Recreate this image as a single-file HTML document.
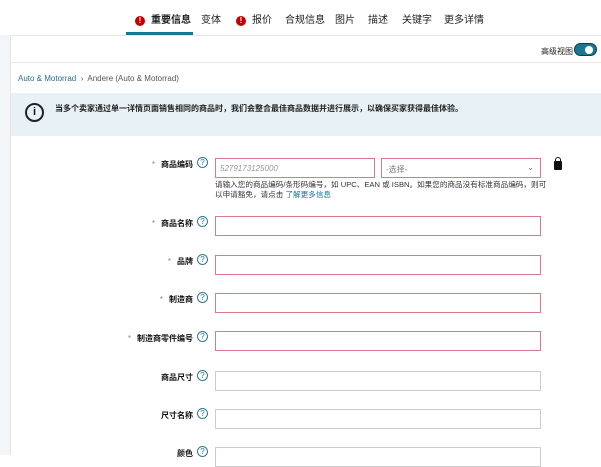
<!DOCTYPE html>
<html><head><meta charset="utf-8"><style>
*{margin:0;padding:0;box-sizing:border-box}
body{width:601px;height:455px;overflow:hidden;background:#fff;font-family:"Liberation Sans","Noto Sans CJK SC",sans-serif;color:#111;position:relative}
.a{position:absolute}
.tab{position:absolute;top:11px;font-size:10px;color:#222}
.err{display:inline-block;width:10px;height:10px;border-radius:50%;background:#c40000;color:#fff;font-size:8px;font-weight:bold;text-align:center;line-height:10px;vertical-align:0px;margin-right:6px}
.lbl{position:absolute;right:408px;font-size:8px;font-weight:bold;white-space:nowrap;color:#111}
.star{color:#888;font-weight:normal;margin-right:6px}
.q{position:absolute;left:197px;width:11px;height:11px;border:1px solid #2a7a93;border-radius:50%;font-size:8px;color:#2a7a93;text-align:center;line-height:9px}
.in{position:absolute;left:215px;width:326px;height:20px;border:1px solid #ccc;background:#fff}
.red{border-color:#d9798c}
</style></head><body>
<div class="tab" style="left:135px;font-weight:bold"><span class="err">!</span>重要信息</div>
<div class="tab" style="left:201px">变体</div>
<div class="tab" style="left:236px"><span class="err">!</span>报价</div>
<div class="tab" style="left:285px">合规信息</div>
<div class="tab" style="left:335px">图片</div>
<div class="tab" style="left:368px">描述</div>
<div class="tab" style="left:402px">关键字</div>
<div class="tab" style="left:444px">更多详情</div>
<div class="a" style="left:126px;top:32px;width:67px;height:3px;background:#1a7692"></div>
<div class="a" style="left:0;top:35px;width:601px;height:420px;background:#f3f5f8"></div>
<div class="a" style="left:10px;top:35px;width:591px;height:420px;background:#fff;border-left:1px solid #e5e5e5;border-top:1px solid #e5e5e5"></div>
<div class="a" style="left:10px;top:62px;width:591px;height:1px;background:#e8e8e8"></div>
<div class="a" style="left:541px;top:46px;font-size:8px;color:#222">高级视图</div>
<div class="a" style="left:574px;top:43px;width:23px;height:13px;border-radius:7px;background:#1a7692;border:1px solid #0d3d4c"></div>
<div class="a" style="left:585px;top:46px;width:8px;height:8px;border-radius:50%;background:#fff"></div>
<div class="a" style="left:18px;top:74px;font-size:8px;color:#555"><span style="color:#2a6f86">Auto &amp; Motorrad</span> &nbsp;›&nbsp; Andere (Auto &amp; Motorrad)</div>
<div class="a" style="left:11px;top:93px;width:590px;height:43px;background:#e8f2f6"></div>
<div class="a" style="left:25px;top:103px;width:19px;height:19px;border:2px solid #222;border-radius:50%;font-size:11px;font-weight:bold;text-align:center;line-height:15px">i</div>
<div class="a" style="left:55px;top:103px;font-size:8px;font-weight:bold;color:#222">当多个卖家通过单一详情页面销售相同的商品时，我们会整合最佳商品数据并进行展示，以确保买家获得最佳体验。</div>

<div class="lbl" style="top:159px"><span class="star">*</span>商品编码</div><div class="q" style="top:157px">?</div>
<div class="in red" style="top:158px;width:160px;font-size:8px;font-style:italic;color:#999;padding:5px 4px">5279173125000</div>
<div class="in red" style="top:158px;left:381px;width:160px;font-size:8px;color:#777;padding:5px 4px">-选择-<span style="position:absolute;right:6px;top:4px">⌄</span></div>
<div class="a" style="left:554px;top:161px;width:8px;height:9px;background:#111;border-radius:1px"></div>
<div class="a" style="left:555px;top:157px;width:6px;height:6px;border:1.5px solid #111;border-bottom:none;border-radius:3px 3px 0 0"></div>
<div class="a" style="left:215px;top:180px;font-size:7.6px;line-height:10px;color:#333;white-space:nowrap">请输入您的商品编码/条形码编号，如 UPC、EAN 或 ISBN。如果您的商品没有标准商品编码，则可<br>以申请豁免，请点击 <span style="color:#1a7692">了解更多信息</span></div>

<div class="lbl" style="top:218px"><span class="star">*</span>商品名称</div><div class="q" style="top:216px">?</div>
<div class="in red" style="top:216px"></div>
<div class="lbl" style="top:256px"><span class="star">*</span>品牌</div><div class="q" style="top:254px">?</div>
<div class="in red" style="top:255px"></div>
<div class="lbl" style="top:294px"><span class="star">*</span>制造商</div><div class="q" style="top:292px">?</div>
<div class="in red" style="top:293px"></div>
<div class="lbl" style="top:333px"><span class="star">*</span>制造商零件编号</div><div class="q" style="top:331px">?</div>
<div class="in red" style="top:331px"></div>
<div class="lbl" style="top:372px">商品尺寸</div><div class="q" style="top:370px">?</div>
<div class="in" style="top:371px"></div>
<div class="lbl" style="top:410px">尺寸名称</div><div class="q" style="top:408px">?</div>
<div class="in" style="top:409px"></div>
<div class="lbl" style="top:448px">颜色</div><div class="q" style="top:446px">?</div>
<div class="in" style="top:447px"></div>
</body></html>
